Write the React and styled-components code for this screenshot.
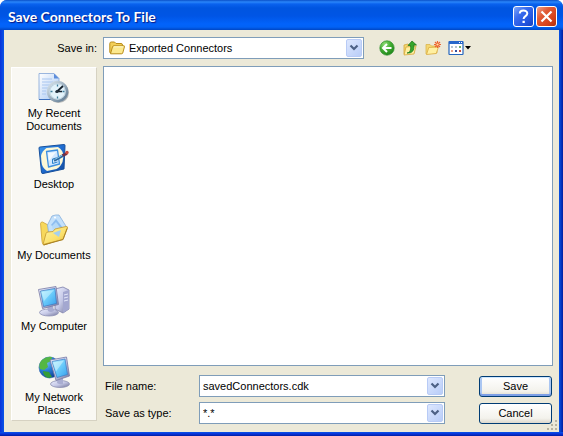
import * as React from 'react';
import styled, { createGlobalStyle, css } from 'styled-components';

const GlobalStyle = createGlobalStyle`
  * {
    box-sizing: border-box;
  }

  body {
    margin: 0;
    background: #fff;
  }

  body, button, input, select {
    font-family: 'Liberation Sans', Arial, sans-serif;
    font-size: 11px;
    line-height: 13px;
    color: #000;
  }
`;

const Dialog = styled.div`
  display: flex;
  flex-direction: column;
  min-height: 100vh;
  border-radius: 7px 7px 0 0;
  background: linear-gradient(90deg, #0831d9, #0855e8 4px, #0855e8 calc(100% - 4px), #001ea0);
  overflow: hidden;
`;

const TitleBar = styled.header`
  display: flex;
  align-items: center;
  gap: 2px;
  height: 30px;
  padding: 3px 6px 0 8px;
  background: linear-gradient(
    #0a50c8 0,
    #2a86fa 2px,
    #0a62ee 4px,
    #0055e0 8px,
    #0055e5 16px,
    #0263fb 24px,
    #0262f5 27px,
    #0046c4 30px
  );
`;

const Title = styled.h1`
  flex: 1;
  margin: 0;
  font-family: Lato, 'Trebuchet MS', sans-serif;
  font-size: 14px;
  font-weight: 700;
  line-height: 16px;
  color: #fff;
  text-shadow: 1px 1px 1px #0a1883;
  white-space: nowrap;
`;

const CaptionButton = styled.button`
  display: flex;
  justify-content: center;
  align-items: center;
  width: 21px;
  height: 21px;
  padding: 0;
  border: 1px solid #fff;
  border-radius: 3px;
  background: ${({ $danger }) =>
    $danger
      ? 'linear-gradient(135deg, #f0a088 0, #e05a36 35%, #d8431c 70%, #b03010)'
      : 'linear-gradient(135deg, #7ea6f8 0, #3a6cee 35%, #2456e0 70%, #1640c0)'};
`;

const Body = styled.main`
  flex: 1;
  display: grid;
  grid-template: 22px 1fr / 86px minmax(0, 1fr);
  gap: 7px 6px;
  margin: 0 4px;
  padding: 7px 6px 8px 7px;
  background: #ece9d8;
`;

const BottomEdge = styled.div`
  height: 4px;
  background: linear-gradient(#0855e8, #0831d9 50%, #001ea0);
`;

const SaveInLabel = styled.label`
  align-self: center;
  text-align: right;
`;

const Toolbar = styled.div`
  display: flex;
  align-items: center;
`;

const ToolButtons = styled.div`
  display: flex;
  gap: 7px;
  margin-left: 15px;
`;

const ToolButton = styled.button`
  display: flex;
  align-items: center;
  gap: 1px;
  padding: 0;
  border: 0;
  background: none;
`;

const ComboBox = styled.div`
  flex: 0 1 ${({ $width }) => $width || 'auto'};
  display: flex;
  align-items: center;
  height: 22px;
  min-width: 0;
  padding: 1px;
  border: 1px solid #7f9db9;
  background: #fff;
`;

const ComboIcon = styled.span`
  display: flex;
  margin: 0 2px 0 4px;
`;

const fieldText = css`
  flex: 1;
  min-width: 0;
  height: 18px;
  padding: 0 18px 0 2px;
  border: 0;
  border-radius: 0;
  outline: 0;
  background: transparent;
`;

const ComboSelect = styled.select`
  ${fieldText}
  appearance: none;
`;

const ComboInput = styled.input`
  ${fieldText}
`;

const arrowBox = css`
  display: flex;
  justify-content: center;
  align-items: center;
  width: 16px;
  height: 18px;
  margin-left: -16px;
  padding: 0;
  border: 1px solid #b8cbf6;
  border-radius: 2px;
  background: linear-gradient(135deg, #dde7fe, #b9cdf8);
`;

const ArrowMark = styled.span`
  ${arrowBox}
  pointer-events: none;
`;

const ArrowButton = styled.button`
  ${arrowBox}
`;

const PlacesBar = styled.nav`
  margin: 1px 0 3px;
  padding-top: 4px;
  border: 1px solid;
  border-color: #fff #d6d2c2 #d6d2c2 #fff;
  background: #f9f8f3;
`;

const Place = styled.a`
  display: flex;
  flex-direction: column;
  align-items: center;
  gap: 3px;
  height: 71px;
  color: #000;
  text-align: center;
  text-decoration: none;

  &:last-child {
    height: auto;
  }
`;

const PlaceLabel = styled.span`
  white-space: pre-line;
`;

const Main = styled.div`
  display: flex;
  flex-direction: column;
  gap: 9px;
`;

const FileList = styled.section`
  flex: 1;
  border: 1px solid #7f9db9;
  background: #fff;
`;

const Fields = styled.form`
  display: grid;
  grid-template-columns: 94px minmax(0, 1fr) 73px;
  align-items: center;
  row-gap: 5px;
  padding: 0 1px 0 2px;
`;

const FieldCombo = styled(ComboBox)`
  margin-right: 34px;
`;

const PushButton = styled.button`
  height: 21px;
  padding: 0;
  border: 1px solid #003c74;
  border-radius: 3px;
  background: linear-gradient(#fff, #f3f2ec 75%, #dcd8cc);
  box-shadow: ${({ $primary }) =>
    $primary ? 'inset 0 1px #cee7ff, inset 0 -2px #7d9fe6, inset 2px 0 #aac6f2, inset -2px 0 #aac6f2' : 'none'};
`;

const Footer = styled.div`
  position: relative;
`;

const SizeGrip = styled.svg`
  position: absolute;
  right: -5px;
  bottom: -7px;
`;

const Chevron = () => (
  <svg width="10" height="8" viewBox="0 0 10 8" fill="none" aria-hidden="true">
    <path d="M1.500 1.500 5 5l3.500-3.500" stroke="#4d6185" strokeWidth="2.200" />
  </svg>
);

const HelpIcon = () => (
  <svg width="17" height="17" viewBox="0 0 17 17" fill="none" aria-hidden="true">
    <path d="M4.800 5.500C4.800 1.500 12.300 1.400 12.300 5.500c0 2.600-3.700 2.700-3.700 5.500" stroke="#fff" strokeWidth="2" />
    <path d="M7.500 12.700h2.300v2.200H7.500z" fill="#fff" />
  </svg>
);

const CloseIcon = () => (
  <svg width="17" height="17" viewBox="0 0 17 17" aria-hidden="true">
    <path d="m3.500 3.500 10 10m0-10-10 10" stroke="#fff" strokeWidth="2.200" />
  </svg>
);

const FolderIcon = () => (
  <svg width="16" height="16" viewBox="0 0 16 16" strokeLinejoin="round" aria-hidden="true">
    <path d="M.8 12.500V3.500q0-1.500 1.500-1.500H5.500L7 3.500h5q1.500 0 1.500 1.500v8z" fill="#f3cf58" stroke="#b98d1c" />
    <path d="m1.500 13.800 2-7q.3-1 1.300-1H15q.7 0 .5.800l-1.700 6.200q-.3 1-1.300 1z" fill="#fce98e" stroke="#b98d1c" />
    <path d="M4.800 6.800h9.400" stroke="#fffbd2" />
  </svg>
);

const BackIcon = () => (
  <svg width="16" height="16" viewBox="0 0 16 16" fill="none" aria-hidden="true">
    <defs>
      <radialGradient id="back" cx=".35" cy=".25" r=".8">
        <stop stopColor="#92dc79" />
        <stop offset=".5" stopColor="#43ad32" />
        <stop offset="1" stopColor="#1d8419" />
      </radialGradient>
    </defs>
    <circle cx="8" cy="8" r="7.200" fill="url(#back)" stroke="#349131" strokeWidth=".7" />
    <path d="M12.500 8H4.500M8 4 4 8l4 4" stroke="#fff" strokeWidth="2" />
  </svg>
);

const UpIcon = () => (
  <svg width="16" height="16" viewBox="0 0 16 16" strokeLinejoin="round" aria-hidden="true">
    <path d="M2 14V5l4-1 1 1 5-1v9z" fill="#f4d772" stroke="#d5a73b" strokeWidth=".8" />
    <path d="m2 15 2-8 10-1-2 8z" fill="#fff0a1" stroke="#d5a73b" strokeWidth=".8" />
    <path d="M5 13c3-.5 4-2.500 3.500-7.500H6l4-4.500 4.500 4h-2.700c.6 5.500-1.500 8.500-6.800 8z" fill="#35a52d" stroke="#187318" strokeWidth=".7" />
  </svg>
);

const NewFolderIcon = () => (
  <svg width="16" height="16" viewBox="0 0 16 16" strokeLinejoin="round" aria-hidden="true">
    <path d="M1 14V4.500h4L6.500 6H12v7z" fill="#f4d772" stroke="#dbb54e" strokeWidth=".8" />
    <path d="m1.500 14.500 2.300-7L13.500 7l-2.300 6.500z" fill="#fff0a1" stroke="#dbac42" strokeWidth=".8" />
    <path d="M12.500 1v7M9 4.500h7M10 2l5 5m0-5-5 5" stroke="#ed6130" strokeWidth="1.200" />
    <circle cx="12.500" cy="4.500" r="1.100" fill="#ffe4a0" />
  </svg>
);

const ViewsIcon = () => (
  <svg width="16" height="16" viewBox="0 0 16 16" aria-hidden="true">
    <rect x="1" y="1.500" width="14" height="13" rx=".5" fill="#fff" stroke="#2465bd" strokeWidth="1.200" />
    <path d="M1 1h14v3H1z" fill="#2867ca" />
    <path d="M11 2h1v1h-1zm2 0h1v1h-1z" fill="#fff" />
    <path d="M3 6h2v2H3zm4 0h2v2H7z" fill="#b4c4d0" />
    <path d="M11 6h2v2h-2z" fill="#6fae68" />
    <path d="M3 10h2v2H3z" fill="#eba085" />
    <path d="M7 10h2v2H7z" fill="#36509e" />
    <path d="M11 10h2v2h-2z" fill="#c54b3c" />
  </svg>
);

const DropMark = () => (
  <svg width="6" height="4" viewBox="0 0 6 4" aria-hidden="true">
    <path d="M0 0h6L3 3.500z" />
  </svg>
);

const RecentIcon = () => (
  <svg width="32" height="32" viewBox="0 0 32 32" aria-hidden="true">
    <defs>
      <linearGradient id="sheet" x2="1" y2="1">
        <stop stopColor="#fff" />
        <stop offset="1" stopColor="#a4c6f4" />
      </linearGradient>
      <linearGradient id="rim" x2="1" y2="1">
        <stop stopColor="#dbe6ee" />
        <stop offset="1" stopColor="#5c7890" />
      </linearGradient>
    </defs>
    <path d="M1 1.500h15l5 5v21H1z" fill="url(#sheet)" stroke="#83a5d7" strokeWidth=".8" />
    <path d="M16 1.500v5h5z" fill="#5d8ddb" />
    <path d="M1 27.500h20" stroke="#3d70be" />
    <path d="M4 7h10M4 10h11M4 13h8M4 16h6M4 19h4M4 22h4" stroke="#a9c6ef" />
    <circle cx="20.500" cy="20.500" r="10.500" fill="#59616b" opacity=".45" />
    <circle cx="19.500" cy="19.500" r="9.500" fill="#eef7fc" stroke="url(#rim)" strokeWidth="2.500" />
    <circle cx="19.500" cy="19.500" r="7.800" fill="#e3f3fb" stroke="#9bb6c8" strokeWidth=".6" />
    <path d="M19.500 12.500v2m0 10v2m-7-7h2m10 0h2" stroke="#3d7d9a" strokeWidth="1.300" />
    <path d="m25 14-6 5.500h5" fill="none" stroke="#15212c" strokeWidth="1.700" />
    <circle cx="19" cy="19.500" r="1.600" fill="#24333f" />
  </svg>
);

const DesktopIcon = () => (
  <svg width="32" height="32" viewBox="0 0 32 32" strokeLinejoin="round" aria-hidden="true">
    <defs>
      <linearGradient id="blotter" x2="1" y2="1">
        <stop stopColor="#3d98ee" />
        <stop offset=".5" stopColor="#1f6cd0" />
        <stop offset="1" stopColor="#124a9c" />
      </linearGradient>
    </defs>
    <path d="m2 4 24-2.500q1 0 1 1L26 26 5 30.500q-1.500 0-1.500-1L1 5q0-1 1-1z" fill="url(#blotter)" stroke="#17509c" />
    <path d="M8.500 5 20 4q5 3 5.500 9l-1 6q-2 5-6 7L9 28q-5-3-5.500-9L3 13q1-5 5.500-8z" fill="#fdf8d6" />
    <path d="m8.500 8.500 11-1.500 2 14-11 3z" fill="#d0e8ff" stroke="#3d8fdf" strokeWidth="1.300" />
    <path d="m10 10 8-1-7 9z" fill="#f2faff" />
    <path d="m18 15-3.500 1v4.500l5-1.500" fill="none" stroke="#2b83cb" />
    <path d="m16 17.500 9-5" stroke="#2c679c" strokeWidth="2.600" />
    <path d="m16.500 16.500 8-4.500" stroke="#8ccdf5" />
    <path d="m24.500 12.500 4.500-2" stroke="#713046" strokeWidth="3" />
    <circle cx="29" cy="9.500" r="1.700" fill="#cc4b3c" />
  </svg>
);

const DocumentsIcon = () => (
  <svg width="32" height="32" viewBox="0 0 32 32" strokeLinejoin="round" aria-hidden="true">
    <defs>
      <linearGradient id="folder" x2="1" y2="1">
        <stop stopColor="#fff6a8" />
        <stop offset=".6" stopColor="#fbe06a" />
        <stop offset="1" stopColor="#e2b638" />
      </linearGradient>
    </defs>
    <path d="M2.500 9.500q0-1.500 2-1.500L10 11l17 3-3 11-18 6q-2-1-2-4z" fill="#f7d85c" stroke="#cfa335" strokeWidth=".8" />
    <path d="m9.500 11 4.500-9q4-1.500 7-1l7.500 12-5 7-13-2z" fill="#c4e1fb" stroke="#87afdc" strokeWidth=".8" />
    <path d="m13 11 5-6 7 9-3 4z" fill="#8dbdf0" />
    <path d="m14 12 4-4 5 7-8 2z" fill="#b5d9f8" />
    <circle cx="17" cy="3.500" r="1" fill="#fff" />
    <path d="m5 30.500 3-11q.5-1.500 2-1.500l5-.5 2-2.500 11-2.500q2 0 1.500 1.500L25 25.500z" fill="url(#folder)" stroke="#c5982f" strokeWidth=".8" />
    <path d="m15 19 8-3-2 7z" fill="#a5d0ee" />
    <path d="m5.500 31 19.500-5.500 4-11" fill="none" stroke="#a98327" />
  </svg>
);

const ScreenGradients = ({ id }) => (
  <defs>
    <linearGradient id={`${id}-screen`} x2="1" y2="1">
      <stop stopColor="#bdf1ff" />
      <stop offset=".5" stopColor="#6acbfa" />
      <stop offset="1" stopColor="#369fed" />
    </linearGradient>
    <linearGradient id={`${id}-case`} x2="1" y2="1">
      <stop stopColor="#edf0ff" />
      <stop offset=".5" stopColor="#c5c8e6" />
      <stop offset="1" stopColor="#717499" />
    </linearGradient>
    <radialGradient id={`${id}-globe`} cx=".3" cy=".25" r=".8">
      <stop stopColor="#81c8fa" />
      <stop offset=".5" stopColor="#287fd7" />
      <stop offset="1" stopColor="#123e95" />
    </radialGradient>
  </defs>
);

const ComputerIcon = () => (
  <svg width="32" height="32" viewBox="0 0 32 32" strokeLinejoin="round" aria-hidden="true">
    <ScreenGradients id="pc" />
    <path d="m17 4 8-2 6 3v19l-6 4-8-4z" fill="url(#pc-case)" stroke="#7b7ea8" strokeWidth=".8" />
    <path d="m25 7 6-2v19l-6 4z" fill="#a3a7d0" />
    <path d="m26 10 4-1m-4 4 4-1m-4 4 4-1" stroke="#e4e7fa" />
    <ellipse cx="11" cy="27.500" rx="9.500" ry="3.500" fill="url(#pc-case)" stroke="#8b8fb5" strokeWidth=".8" />
    <path d="m9 21 6-1 1 6q-3 2-6 0z" fill="#a7abd0" />
    <path d="M.5 4.500 18 1.500l2.500 18-16 4z" fill="url(#pc-case)" stroke="#777aa4" strokeWidth=".8" />
    <path d="m2.500 6 14.500-2.500 1.500 15L5.500 21.500z" fill="url(#pc-screen)" stroke="#3b73bc" strokeWidth=".7" />
    <path d="m3.500 7 12.500-2L6 16z" fill="#ddfaff" opacity=".45" />
  </svg>
);

const NetworkIcon = () => (
  <svg width="32" height="32" viewBox="0 0 32 32" strokeLinejoin="round" aria-hidden="true">
    <ScreenGradients id="net" />
    <circle cx="11.500" cy="11.500" r="10.500" fill="url(#net-globe)" stroke="#265fac" strokeWidth=".6" />
    <path d="M4 4q5-4 10-3l-1 4-4 2 1 4-4 3-4-1Q0 8 4 4z" fill="#54b744" />
    <path d="m5 15 6 1 3 5-4 1q-5-2-5-7zM16 3l4 3-2 4-4-2z" fill="#359d38" />
    <ellipse cx="22" cy="28" rx="9.500" ry="3.500" fill="url(#net-case)" stroke="#8c8fb1" strokeWidth=".8" />
    <path d="m20 21 5 1v6q-3 1-6-1z" fill="#a9add1" />
    <path d="m12 4 16.500-3 3 19L18 24.500z" fill="url(#net-case)" stroke="#777aa4" strokeWidth=".8" />
    <path d="m14 5.500 13-2.500 2.500 15.500-10.500 3z" fill="url(#net-screen)" stroke="#397bc5" strokeWidth=".7" />
    <path d="m15 6.500 11-2-8 11z" fill="#e0faff" opacity=".5" />
  </svg>
);

const places = [
  { label: 'My Recent\nDocuments', icon: RecentIcon },
  { label: 'Desktop', icon: DesktopIcon },
  { label: 'My Documents', icon: DocumentsIcon },
  { label: 'My Computer', icon: ComputerIcon },
  { label: 'My Network\nPlaces', icon: NetworkIcon }
];

export default class App extends React.Component {
  constructor() {
    super();

    this.state = {
      fileName: 'savedConnectors.cdk'
    };
  }

  render() {
    const { fileName } = this.state;

    return (
      <Dialog role="dialog" aria-labelledby="title">
        <GlobalStyle />
        <TitleBar>
          <Title id="title">Save Connectors To File</Title>
          <CaptionButton type="button" aria-label="Help">
            <HelpIcon />
          </CaptionButton>
          <CaptionButton type="button" aria-label="Close" $danger>
            <CloseIcon />
          </CaptionButton>
        </TitleBar>
        <Body>
          <SaveInLabel htmlFor="save-in">Save in:</SaveInLabel>
          <Toolbar>
            <ComboBox $width="261px">
              <ComboIcon>
                <FolderIcon />
              </ComboIcon>
              <ComboSelect id="save-in">
                <option>Exported Connectors</option>
              </ComboSelect>
              <ArrowMark>
                <Chevron />
              </ArrowMark>
            </ComboBox>
            <ToolButtons>
              <ToolButton type="button" aria-label="Back">
                <BackIcon />
              </ToolButton>
              <ToolButton type="button" aria-label="Up one level">
                <UpIcon />
              </ToolButton>
              <ToolButton type="button" aria-label="New folder">
                <NewFolderIcon />
              </ToolButton>
              <ToolButton type="button" aria-label="Views">
                <ViewsIcon />
                <DropMark />
              </ToolButton>
            </ToolButtons>
          </Toolbar>
          <PlacesBar>
            {places.map(({ label, icon: Icon }) => (
              <Place href="#" key={label}>
                <Icon />
                <PlaceLabel>{label}</PlaceLabel>
              </Place>
            ))}
          </PlacesBar>
          <Main>
            <FileList aria-label="Files" />
            <Footer>
              <Fields onSubmit={e => e.preventDefault()}>
                <label htmlFor="file-name">File name:</label>
                <FieldCombo>
                  <ComboInput
                    id="file-name"
                    value={fileName}
                    onChange={e => this.setState({ fileName: e.target.value })}
                  />
                  <ArrowButton type="button" aria-label="Recent file names">
                    <Chevron />
                  </ArrowButton>
                </FieldCombo>
                <PushButton type="submit" $primary>
                  Save
                </PushButton>
                <label htmlFor="file-type">Save as type:</label>
                <FieldCombo>
                  <ComboSelect id="file-type">
                    <option>*.*</option>
                  </ComboSelect>
                  <ArrowMark>
                    <Chevron />
                  </ArrowMark>
                </FieldCombo>
                <PushButton type="button">Cancel</PushButton>
              </Fields>
              <SizeGrip width="12" height="12" viewBox="0 0 12 12" aria-hidden="true">
                <path d="M9 1h2v2H9zM5 5h2v2H5zm4 0h2v2H9zM1 9h2v2H1zm4 0h2v2H5zm4 0h2v2H9z" fill="#b8b4a3" />
              </SizeGrip>
            </Footer>
          </Main>
        </Body>
        <BottomEdge />
      </Dialog>
    );
  }
}
